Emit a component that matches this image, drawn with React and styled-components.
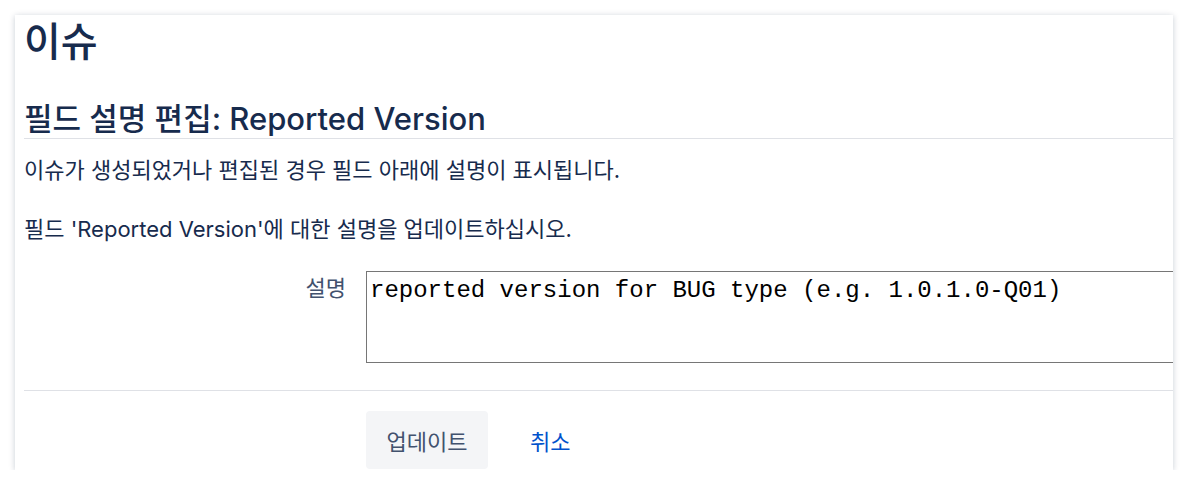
import React from 'react';
import styled, { createGlobalStyle } from 'styled-components';

const GlobalStyle = createGlobalStyle`
  html, body {
    margin: 0;
    padding: 0;
    background: #ffffff;
  }
  body {
    font-family: Inter, "Noto Sans CJK KR", sans-serif;
    color: #172b4d;
  }
`;

const Page = styled.div`
  padding: 15px 15px 0 15px;
`;

const Panel = styled.section`
  width: 1158px;
  height: 455px;
  overflow: hidden;
  background: #ffffff;
  box-shadow: 0 1px 6px rgba(9, 30, 66, 0.22);
  padding-left: 9px;
  box-sizing: border-box;
`;

const Title = styled.h1`
  margin: 3px 0 0 0;
  font-size: 40px;
  font-weight: 500;
  line-height: 48px;
  color: #172b4d;
`;

const SubTitle = styled.h2`
  margin: 35px 0 0 0;
  padding-bottom: 1px;
  font-size: 31px;
  font-weight: 500;
  line-height: 36px;
  color: #172b4d;
  border-bottom: 1px solid #dfe1e6;
`;

const Text = styled.p`
  margin: ${(p) => p.$top}px 0 0 0;
  font-size: 22px;
  line-height: 28px;
`;

const FieldRow = styled.div`
  display: flex;
  align-items: flex-start;
  margin-top: 28px;
`;

const Label = styled.label`
  width: 322px;
  padding-top: 3px;
  text-align: right;
  font-size: 22px;
  line-height: 28px;
  color: #42526e;
  flex-shrink: 0;
`;

const Area = styled.textarea`
  margin-left: 20px;
  width: 900px;
  height: 92px;
  box-sizing: border-box;
  padding: 4px 3px;
  border: 1px solid #767676;
  border-right: none;
  font-family: "Liberation Mono", monospace;
  font-size: 24px;
  line-height: 30px;
  color: #000000;
  resize: none;
  flex-shrink: 0;
`;

const Divider = styled.hr`
  margin: 27px 0 0 0;
  border: none;
  border-top: 1px solid #dfe1e6;
`;

const Actions = styled.div`
  display: flex;
  align-items: center;
  gap: 22px;
  margin-top: 20px;
  padding-left: 342px;
`;

const Button = styled.button`
  width: 122px;
  height: 58px;
  border: none;
  border-radius: 4px;
  background: #f4f5f7;
  color: #42526e;
  font-family: Inter, "Noto Sans CJK KR", sans-serif;
  font-size: 22px;
  cursor: pointer;
`;

const Link = styled.a`
  padding: 0 20px;
  color: #0052cc;
  font-size: 22px;
  text-decoration: none;
`;

export default function App() {
  return (
    <Page>
      <GlobalStyle />
      <Panel>
        <Title>이슈</Title>
        <SubTitle>필드 설명 편집: Reported Version</SubTitle>
        <Text $top={17}>이슈가 생성되었거나 편집된 경우 필드 아래에 설명이 표시됩니다.</Text>
        <Text $top={31}>필드 'Reported Version'에 대한 설명을 업데이트하십시오.</Text>
        <FieldRow>
          <Label>설명</Label>
          <Area defaultValue="reported version for BUG type (e.g. 1.0.1.0-Q01)" />
        </FieldRow>
        <Divider />
        <Actions>
          <Button>업데이트</Button>
          <Link href="#">취소</Link>
        </Actions>
      </Panel>
    </Page>
  );
}
